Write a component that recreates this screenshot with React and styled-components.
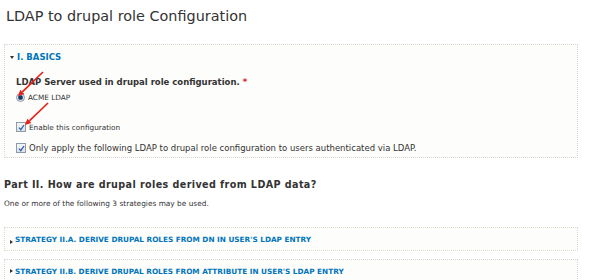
import React from "react";
import styled, { createGlobalStyle } from "styled-components";

const Global = createGlobalStyle`
  html, body { margin: 0; padding: 0; background: #fff; }
  body { font-family: "DejaVu Sans", Verdana, sans-serif; color: #333; }
`;

const Page = styled.div`
  position: relative;
  width: 600px;
  height: 280px;
  overflow: hidden;
  padding: 0 0 0 4px;
  box-sizing: border-box;
`;

const Title = styled.h1`
  margin: 0;
  padding: 6px 0 0 2px;
  height: 44px;
  box-sizing: border-box;
  font-size: 14.4px;
  line-height: 20px;
  font-weight: normal;
  color: #333;
`;

const Fieldset = styled.div`
  width: 574px;
  box-sizing: border-box;
  border: 1px dotted ${(p) => p.$border || "#d6d0d4"};
  background: #fdfdfb;
  padding: 0 0 0 5px;
  height: ${(p) => p.$height}px;
  margin-bottom: ${(p) => p.$mb || 8}px;
`;

const Legend = styled.div`
  display: flex;
  align-items: center;
  gap: ${(p) => p.$gap || 3}px;
  height: ${(p) => p.$h || 24}px;
  font-size: ${(p) => p.$size || 7.5}px;
  font-weight: bold;
  color: #0074bd;
  text-transform: uppercase;
`;

const Arrow = styled.span`
  display: inline-block;
  flex: none;
  width: 0;
  height: 0;
  ${(p) =>
    p.$open
      ? `border-left: 2.5px solid transparent; border-right: 2.5px solid transparent; border-top: 3px solid #333;`
      : `border-top: 2.5px solid transparent; border-bottom: 2.5px solid transparent; border-left: 3px solid #333;`}
  position: relative;
  top: ${(p) => p.$shift || 0}px;
`;

const Body = styled.div`
  padding: 7px 0 0 6px;
`;

const FieldLabel = styled.div`
  font-size: 8.5px;
  font-weight: bold;
  line-height: 12px;
  color: #333;
  margin-bottom: 3px;
`;

const Req = styled.span`
  color: #e0201c;
`;

const Option = styled.label`
  display: flex;
  align-items: center;
  gap: 3px;
  height: 12px;
  font-size: ${(p) => p.$size || 7.3}px;
  color: #333;
  margin-top: ${(p) => p.$mt || 0}px;
`;

const RadioDot = styled.span`
  width: 7px;
  height: 7px;
  border-radius: 50%;
  border: 1px solid #8e97a3;
  background: radial-gradient(circle, #17375f 0 1.7px, #5d7fa8 2.3px, #e3e7ec 3px);
  flex: none;
`;

const CheckBox = styled.span`
  width: 8px;
  height: 8px;
  border: 1px solid #8f9aa8;
  background: linear-gradient(#f4f6f8, #dde2e8);
  flex: none;
  display: flex;
  align-items: center;
  justify-content: center;
`;

const Heading = styled.div`
  font-size: 9.6px;
  letter-spacing: 0.4px;
  font-weight: bold;
  line-height: 12px;
  margin-top: 21px;
`;

const Desc = styled.div`
  font-size: 7.4px;
  line-height: 12px;
  margin-top: 7px;
  margin-bottom: 17px;
`;

const Overlay = styled.svg`
  position: absolute;
  left: 0;
  top: 0;
  pointer-events: none;
`;

function Check() {
  return (
    <CheckBox>
      <svg width="7" height="7" viewBox="0 0 7 7">
        <path d="M1 3.6 L2.8 5.6 L6 1" fill="none" stroke="#2f5fa8" strokeWidth="1.3" />
      </svg>
    </CheckBox>
  );
}

function RedArrow({ x1, y1, x2, y2 }) {
  const ang = Math.atan2(y2 - y1, x2 - x1);
  const L = 6, W = 3;
  const bx = x2 - L * Math.cos(ang), by = y2 - L * Math.sin(ang);
  const px = -Math.sin(ang) * W, py = Math.cos(ang) * W;
  return (
    <g>
      <line x1={x1} y1={y1} x2={bx} y2={by} stroke="#e8211b" strokeWidth="1.7" />
      <polygon points={`${x2},${y2} ${bx + px},${by + py} ${bx - px},${by - py}`} fill="#e8211b" />
    </g>
  );
}

export default function App() {
  return (
    <>
      <Global />
      <Page>
        <Title>LDAP to drupal role Configuration</Title>
        <Fieldset $height={114} $border="#ddd3d6">
          <Legend $h={24} $size={8.5}>
            <Arrow $open />
            I. Basics
          </Legend>
          <Body>
            <FieldLabel>
              LDAP Server used in drupal role configuration. <Req>*</Req>
            </FieldLabel>
            <Option>
              <RadioDot />
              ACME LDAP
            </Option>
            <Option $mt={18}>
              <Check />
              Enable this configuration
            </Option>
            <Option $mt={9} $size={8.5}>
              <Check />
              Only apply the following LDAP to drupal role configuration to users authenticated via LDAP.
            </Option>
          </Body>
        </Fieldset>
        <Heading>Part II. How are drupal roles derived from LDAP data?</Heading>
        <Desc>One or more of the following 3 strategies may be used.</Desc>
        <Fieldset $height={24} $border="#dcd8cc">
          <Legend $h={22} $size={7.3} $gap={2}>
            <Arrow $shift={3} />
            Strategy II.A. Derive drupal roles from DN in user's LDAP entry
          </Legend>
        </Fieldset>
        <Fieldset $height={30} $border="#d8d4d8">
          <Legend $h={22} $size={7.3} $gap={2}>
            <Arrow />
            Strategy II.B. Derive drupal roles from attribute in user's LDAP entry
          </Legend>
        </Fieldset>
        <Overlay width="600" height="280">
          <RedArrow x1={43} y1={72} x2={18} y2={96} />
          <RedArrow x1={48} y1={103} x2={25} y2={125} />
        </Overlay>
      </Page>
    </>
  );
}
